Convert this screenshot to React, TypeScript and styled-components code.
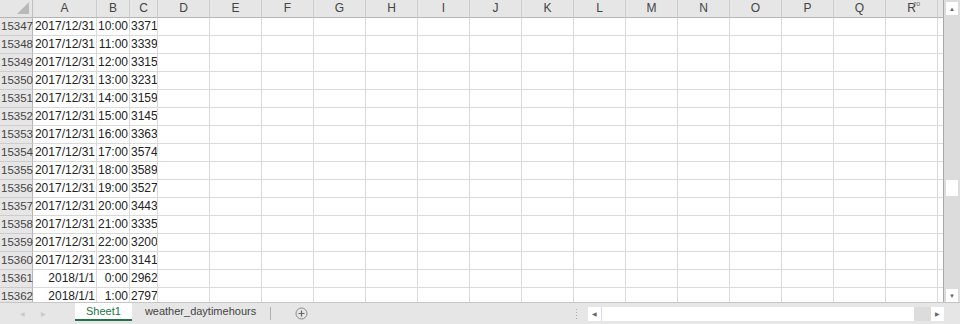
import styled, { createGlobalStyle } from "styled-components";

const GlobalStyle = createGlobalStyle`
  html, body {
    margin: 0;
    padding: 0;
    background: #e6e6e6;
  }
  body {
    font-family: "Liberation Sans", Arial, sans-serif;
  }
`;

const COLS = ["A", "B", "C", "D", "E", "F", "G", "H", "I", "J", "K", "L", "M", "N", "O", "P", "Q", "R"];
const WIDTHS = [64, 33, 28, 52, 52, 52, 52, 52, 52, 52, 52, 52, 52, 52, 52, 52, 52, 52];

const rows: [number, string, string, string][] = [
  [15347, "2017/12/31", "10:00", "3371"],
  [15348, "2017/12/31", "11:00", "3339"],
  [15349, "2017/12/31", "12:00", "3315"],
  [15350, "2017/12/31", "13:00", "3231"],
  [15351, "2017/12/31", "14:00", "3159"],
  [15352, "2017/12/31", "15:00", "3145"],
  [15353, "2017/12/31", "16:00", "3363"],
  [15354, "2017/12/31", "17:00", "3574"],
  [15355, "2017/12/31", "18:00", "3589"],
  [15356, "2017/12/31", "19:00", "3527"],
  [15357, "2017/12/31", "20:00", "3443"],
  [15358, "2017/12/31", "21:00", "3335"],
  [15359, "2017/12/31", "22:00", "3200"],
  [15360, "2017/12/31", "23:00", "3141"],
  [15361, "2018/1/1", "0:00", "2962"],
  [15362, "2018/1/1", "1:00", "2797"],
];

const Window = styled.div`
  width: 960px;
  height: 324px;
  display: flex;
  flex-direction: column;
  overflow: hidden;
  background: #e6e6e6;
`;

const SheetArea = styled.div`
  display: flex;
  height: 302px;
  border-bottom: 1px solid #c6c6c6;
`;

const GridArea = styled.div`
  width: 943px;
  height: 302px;
  overflow: hidden;
  background: #fff;
  border-right: 1px solid #a9a9a9;
`;

const Grid = styled.div`
  display: grid;
  grid-template-columns: 33px ${WIDTHS.map((w) => `${w}px`).join(" ")} 10px;
  grid-auto-rows: 18px;
`;

const Corner = styled.div`
  position: relative;
  background: #e6e6e6;
  border-right: 1px solid #c0c0c0;
  border-bottom: 1px solid #b5b5b5;
  box-sizing: border-box;
  &::after {
    content: "";
    position: absolute;
    right: 3px;
    bottom: 3px;
    width: 0;
    height: 0;
    border-left: 12px solid transparent;
    border-bottom: 12px solid #b9b9b9;
  }
`;

const ColHead = styled.div`
  background: #e6e6e6;
  border-right: 1px solid #cdcdcd;
  border-bottom: 1px solid #b5b5b5;
  box-sizing: border-box;
  color: #444;
  font-size: 12px;
  line-height: 17px;
  text-align: center;
  position: relative;
`;

const Mark = styled.span`
  position: absolute;
  top: -5px;
  left: 28px;
  font-size: 7px;
  color: #666;
`;

const RowHead = styled.div`
  background: #e6e6e6;
  border-right: 1px solid #b5b5b5;
  border-bottom: 1px solid #cdcdcd;
  box-sizing: border-box;
  color: #444;
  font-size: 11.5px;
  line-height: 17px;
  padding-left: 1px;
`;

const Cell = styled.div<{ $align?: string }>`
  border-right: 1px solid #dadada;
  border-bottom: 1px solid #dadada;
  box-sizing: border-box;
  color: #222;
  font-size: 12px;
  line-height: 17px;
  text-align: ${(p) => p.$align || "left"};
  padding: 0 1px;
  white-space: nowrap;
  overflow: hidden;
`;

const VScroll = styled.div`
  width: 16px;
  height: 302px;
  background: #dcdcdc;
  display: flex;
  flex-direction: column;
  align-items: center;
`;

const ArrowBtn = styled.div<{ $h?: number }>`
  width: 12px;
  height: ${(p) => p.$h || 14}px;
  margin-top: 2px;
  background: #fff;
  display: flex;
  align-items: center;
  justify-content: center;
  color: #666;
  font-size: 6px;
`;

const VThumb = styled.div`
  width: 12px;
  height: 16px;
  margin-top: 165px;
  background: #fff;
`;

const Spacer = styled.div`
  flex: 1;
`;

const TabBar = styled.div`
  height: 21px;
  display: flex;
  align-items: stretch;
  background: #e6e6e6;
  padding-left: 12px;
  padding-right: 16px;
`;

const NavArrow = styled.div`
  width: 21px;
  display: flex;
  align-items: center;
  justify-content: center;
  color: #c8c8c8;
  font-size: 6px;
`;

const TabStrip = styled.div`
  margin-left: 21px;
  display: flex;
  align-items: stretch;
`;

const Tab = styled.div<{ $active?: boolean }>`
  display: flex;
  align-items: center;
  padding: 0 ${(p) => (p.$active ? "11px" : "13px")};
  font-size: 11px;
  color: ${(p) => (p.$active ? "#217346" : "#444")};
  background: ${(p) => (p.$active ? "#fff" : "transparent")};
  border-bottom: 2px solid ${(p) => (p.$active ? "#217346" : "transparent")};
  box-sizing: border-box;
  height: 18px;
`;

const Sep = styled.div`
  width: 1px;
  height: 13px;
  background: #b0b0b0;
  align-self: center;
  margin-left: 1px;
`;

const AddBtn = styled.div`
  margin-left: 24px;
  display: flex;
  align-items: center;
`;

const Splitter = styled.div`
  width: 1px;
  margin-right: 11px;
  display: flex;
  flex-direction: column;
  align-items: center;
  justify-content: center;
  gap: 2px;
  & > i {
    width: 1px;
    height: 1px;
    background: #aaa;
  }
`;

const HScroll = styled.div`
  width: 356px;
  height: 14px;
  align-self: center;
  display: flex;
  background: #dcdcdc;
`;

const HBtn = styled.div`
  width: 13px;
  background: #fff;
  display: flex;
  align-items: center;
  justify-content: center;
  color: #666;
  font-size: 6px;
`;

const HThumb = styled.div`
  width: 312px;
  background: #fff;
  border-left: 1px solid #dcdcdc;
`;

export default function App() {
  return (
    <Window>
      <GlobalStyle />
      <SheetArea>
        <GridArea>
          <Grid>
            <Corner />
            {COLS.map((c) => (
              <ColHead key={c}>
                {c}
                {c === "R" && <Mark>ro</Mark>}
              </ColHead>
            ))}
            <ColHead />
            {rows.map(([n, d, t, v]) => (
              <>
                <RowHead key={`h${n}`}>{n}</RowHead>
                <Cell $align="right">{d}</Cell>
                <Cell $align="right">{t}</Cell>
                <Cell $align="right">{v}</Cell>
                {COLS.slice(3).map((c) => (
                  <Cell key={`${n}${c}`} />
                ))}
                <Cell />
              </>
            ))}
          </Grid>
        </GridArea>
        <VScroll>
          <ArrowBtn $h={13}>▲</ArrowBtn>
          <VThumb />
          <Spacer />
          <ArrowBtn $h={13}>▼</ArrowBtn>
        </VScroll>
      </SheetArea>
      <TabBar>
        <NavArrow>◀</NavArrow>
        <NavArrow>▶</NavArrow>
        <TabStrip>
          <Tab $active>Sheet1</Tab>
          <Tab>weather_daytimehours</Tab>
          <Sep />
          <AddBtn>
            <svg width="13" height="13" viewBox="0 0 13 13">
              <circle cx="6.5" cy="6.5" r="5.5" fill="none" stroke="#888" strokeWidth="1" />
              <path d="M6.5 3.5v6M3.5 6.5h6" stroke="#666" strokeWidth="1.2" />
            </svg>
          </AddBtn>
        </TabStrip>
        <Spacer />
        <Splitter>
          <i />
          <i />
          <i />
          <i />
        </Splitter>
        <HScroll>
          <HBtn>◀</HBtn>
          <HThumb />
          <Spacer />
          <HBtn>▶</HBtn>
        </HScroll>
      </TabBar>
    </Window>
  );
}
